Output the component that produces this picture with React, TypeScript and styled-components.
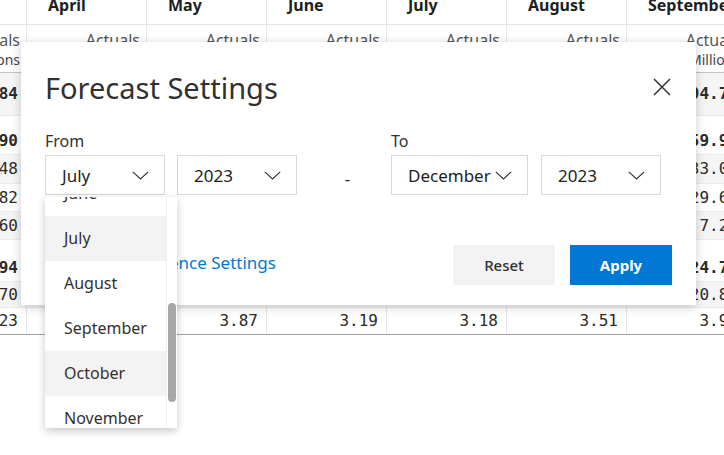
import React from 'react';
import styled, { createGlobalStyle } from 'styled-components';

const GlobalStyle = createGlobalStyle`
  html, body {
    margin: 0;
    padding: 0;
    background: #fff;
    overflow: hidden;
  }
  * { box-sizing: border-box; }
`;

const months = ['March', 'April', 'May', 'June', 'July', 'August', 'September'];

interface RowData {
  values: string[];
  height: number;
  bold?: boolean;
  shade?: boolean;
  bottom?: boolean;
}

const rows: RowData[] = [
  { values: ['51.84', '62.10', '58.33', '60.47', '71.25', '80.02', '94.71'], height: 43, bold: true, shade: true },
  { values: ['39.90', '44.21', '41.05', '43.88', '52.13', '57.40', '59.93'], height: 39, bold: true },
  { values: ['21.48', '24.07', '22.91', '23.56', '29.14', '31.62', '33.08'], height: 29, shade: true },
  { values: ['12.82', '14.90', '13.77', '14.02', '17.31', '19.22', '29.64'], height: 28 },
  { values: ['5.60', '5.24', '4.37', '6.30', '5.68', '6.56', '7.24'], height: 28, shade: true },
  { values: ['11.94', '17.89', '17.28', '16.59', '19.12', '22.62', '24.76'], height: 42, bold: true },
  { values: ['9.70', '14.02', '13.41', '13.40', '15.94', '19.11', '20.85'], height: 26, shade: true },
  { values: ['2.23', '3.87', '3.87', '3.19', '3.18', '3.51', '3.92'], height: 27, bottom: true },
];

const monthOptions = ['June', 'July', 'August', 'September', 'October', 'November'];

const Chevron = () => (
  <svg width="17" height="9" viewBox="0 0 17 9" fill="none">
    <polyline points="0.8,0.8 8.5,8 16.2,0.8" stroke="#323130" strokeWidth="1.1" />
  </svg>
);

const CloseIcon = () => (
  <svg width="18" height="18" viewBox="0 0 18 18" fill="none">
    <path d="M1 1 L17 17 M17 1 L1 17" stroke="#323130" strokeWidth="1.5" />
  </svg>
);

export default function App() {
  return (
    <>
      <GlobalStyle />
      <Page>
        <Table>
          <GridRow $height={40} $line="#e6e6e6">
            {months.map((m) => (
              <HeadCell key={m}>{m}</HeadCell>
            ))}
          </GridRow>
          <GridRow $height={48} $line="#c4c4c4">
            {months.map((m) => (
              <SubCell key={m}>
                <span>Actuals</span>
                <small>Millions</small>
              </SubCell>
            ))}
          </GridRow>
          {rows.map((r, i) => (
            <GridRow
              key={i}
              $height={r.height}
              $shade={r.shade}
              $line={r.bottom ? '#a6a6a6' : '#ebebeb'}
            >
              {r.values.map((v, j) => (
                <NumCell key={j} $bold={r.bold} $end={r.bold && i > 0}>
                  {v}
                </NumCell>
              ))}
            </GridRow>
          ))}
        </Table>

        <Modal>
          <TitleBar>
            <Title>Forecast Settings</Title>
            <CloseButton>
              <CloseIcon />
            </CloseButton>
          </TitleBar>

          <Fields>
            <FieldGroup>
              <Label>From</Label>
              <SelectRow $gap={12}>
                <SelectWrap>
                  <Select $width={120}>
                    July
                    <Chevron />
                  </Select>
                  <OptionList>
                    <OptionScroll>
                      <Options>
                        {monthOptions.map((m) => (
                          <OptionItem key={m} $active={m === 'July' || m === 'October'}>
                            {m}
                          </OptionItem>
                        ))}
                      </Options>
                    </OptionScroll>
                    <ScrollTrack>
                      <ScrollThumb />
                    </ScrollTrack>
                  </OptionList>
                </SelectWrap>
                <Select $width={120}>
                  2023
                  <Chevron />
                </Select>
              </SelectRow>
            </FieldGroup>

            <Dash>-</Dash>

            <FieldGroup>
              <Label>To</Label>
              <SelectRow $gap={13}>
                <Select $width={137}>
                  December
                  <Chevron />
                </Select>
                <Select $width={120}>
                  2023
                  <Chevron />
                </Select>
              </SelectRow>
            </FieldGroup>
          </Fields>

          <Footer>
            <Link>Forecast Confidence Settings</Link>
            <Buttons>
              <Button>Reset</Button>
              <Button $primary>Apply</Button>
            </Buttons>
          </Footer>
        </Modal>
      </Page>
    </>
  );
}

const Page = styled.div`
  position: relative;
  width: 724px;
  height: 455px;
  overflow: hidden;
  font-family: "Noto Sans", "DejaVu Sans", sans-serif;
  color: #323130;
`;

const Table = styled.div`
  display: flex;
  flex-direction: column;
  margin-left: -93px;
  margin-top: -15px;
  width: 840px;
`;

const GridRow = styled.div<{ $height: number; $shade?: boolean; $line: string }>`
  display: grid;
  grid-template-columns: repeat(7, 120px);
  height: ${(p) => p.$height}px;
  background: ${(p) => (p.$shade ? '#f5f5f5' : '#fff')};
  border-bottom: 1px solid ${(p) => p.$line};
`;

const HeadCell = styled.div`
  display: flex;
  align-items: center;
  padding-left: 21px;
  border-right: 1px solid #e6e6e6;
  font-size: 16px;
  font-weight: 700;
  color: #201f1e;
`;

const SubCell = styled.div`
  display: flex;
  flex-direction: column;
  align-items: flex-end;
  padding: 5px 6px 0 0;
  border-right: 1px solid #e6e6e6;
  font-size: 16px;
  line-height: 20px;
  color: #555;

  small {
    font-size: 14px;
    color: #444;
  }
`;

const NumCell = styled.div<{ $bold?: boolean; $end?: boolean }>`
  display: flex;
  justify-content: flex-end;
  align-items: ${(p) => (p.$end ? 'flex-end' : 'center')};
  padding: 0 8px ${(p) => (p.$end ? '3px' : '0')} 0;
  border-right: 1px solid #e6e6e6;
  font-family: "DejaVu Sans Mono", "Liberation Mono", monospace;
  font-size: 16px;
  line-height: 20px;
  font-weight: ${(p) => (p.$bold ? 700 : 400)};
  color: #2b2b2b;
`;

const Modal = styled.div`
  position: absolute;
  left: 21px;
  top: 42px;
  width: 675px;
  height: 263px;
  display: flex;
  flex-direction: column;
  padding: 26px 24px 20px 24px;
  background: #fff;
  box-shadow: 0 2px 10px rgba(0, 0, 0, 0.2);
`;

const TitleBar = styled.div`
  display: flex;
  align-items: center;
  justify-content: space-between;
  height: 40px;
`;

const Title = styled.h1`
  margin: 0;
  font-size: 29px;
  font-weight: 400;
  line-height: 40px;
  color: #323130;
`;

const CloseButton = styled.div`
  display: flex;
  margin-right: 1px;
  margin-top: -3px;
`;

const Fields = styled.div`
  display: flex;
  align-items: flex-end;
  margin-top: 22px;
`;

const FieldGroup = styled.div`
  display: flex;
  flex-direction: column;
  gap: 3px;
`;

const Label = styled.div`
  font-size: 16px;
  line-height: 22px;
  color: #323130;
`;

const SelectRow = styled.div<{ $gap: number }>`
  display: flex;
  gap: ${(p) => p.$gap}px;
`;

const SelectWrap = styled.div`
  position: relative;
`;

const Select = styled.div<{ $width: number }>`
  display: flex;
  align-items: center;
  justify-content: space-between;
  width: ${(p) => p.$width}px;
  height: 40px;
  padding: 0 15px 0 16px;
  border: 1px solid #d8d8d8;
  font-size: 17px;
  color: #201f1e;
  background: #fff;
`;

const Dash = styled.div`
  width: 94px;
  height: 40px;
  padding: 9px 0 0 7px;
  text-align: center;
  font-size: 17px;
  line-height: 30px;
  color: #201f1e;
`;

const OptionList = styled.div`
  position: absolute;
  left: 0;
  top: 42px;
  width: 132px;
  height: 231px;
  display: flex;
  background: #fff;
  box-shadow: 0 3px 8px rgba(0, 0, 0, 0.22);
  z-index: 5;
`;

const OptionScroll = styled.div`
  flex: 1;
  overflow: hidden;
`;

const Options = styled.div`
  margin-top: -26px;
`;

const OptionItem = styled.div<{ $active?: boolean }>`
  height: 45px;
  display: flex;
  align-items: center;
  padding: 0 0 2px 19px;
  font-size: 16px;
  color: #323130;
  background: ${(p) => (p.$active ? '#f3f3f3' : 'transparent')};
`;

const ScrollTrack = styled.div`
  width: 11px;
  padding: 106px 1px 0 1px;
  border-radius: 0 6px 6px 0;
  border-left: 1px solid #f0f0f0;
`;

const ScrollThumb = styled.div`
  height: 99px;
  border-radius: 5px;
  background: #a8a8a8;
`;

const Footer = styled.div`
  margin-top: auto;
  display: flex;
  align-items: center;
  justify-content: space-between;
`;

const Link = styled.a`
  font-size: 17px;
  line-height: 22px;
  margin-top: -4px;
  color: #0078d4;
  cursor: pointer;
`;

const Buttons = styled.div`
  display: flex;
  gap: 15px;
`;

const Button = styled.button<{ $primary?: boolean }>`
  width: 102px;
  height: 40px;
  border: none;
  font-family: "Noto Sans", sans-serif;
  font-size: 15px;
  font-weight: ${(p) => (p.$primary ? 700 : 500)};
  color: ${(p) => (p.$primary ? '#fff' : '#323130')};
  background: ${(p) => (p.$primary ? '#0078d4' : '#f3f3f3')};
`;
